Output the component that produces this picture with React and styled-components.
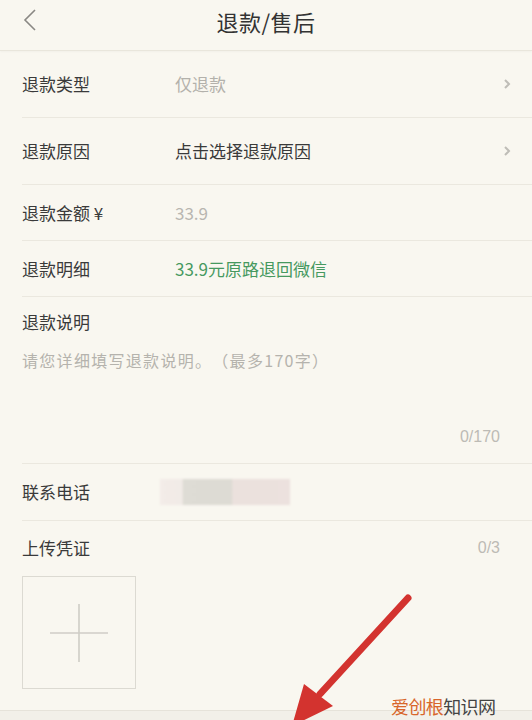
import styled, { createGlobalStyle } from 'styled-components';

const GlobalStyle = createGlobalStyle`
  body {
    margin: 0;
    background: #f9f7f0;
    font-family: 'Noto Sans CJK SC', 'Noto Sans', sans-serif;
  }
`;

const Page = styled.div`
  position: relative;
  width: 532px;
  height: 720px;
  overflow: hidden;
  background: #f9f7f0;
  display: flex;
  flex-direction: column;
  color: #3a3a3a;
`;

const Header = styled.header`
  height: 50px;
  flex-shrink: 0;
  display: flex;
  align-items: flex-start;
  justify-content: center;
  position: relative;
  border-bottom: 1px solid #e9e6dc;
  box-shadow: 0 1px 2px rgba(0, 0, 0, 0.03);
`;

const BackButton = styled.svg`
  position: absolute;
  left: 22px;
  top: 8px;
`;

const Title = styled.h1`
  margin: 6px 0 0;
  font-size: 22px;
  line-height: 30px;
  font-weight: 400;
  color: #333;
  letter-spacing: 0.5px;
`;

const Row = styled.div`
  height: ${(p) => p.$h}px;
  flex-shrink: 0;
  margin-left: 22px;
  padding-right: 20px;
  display: flex;
  align-items: center;
  border-bottom: 1px solid #ebe8df;
`;

const Label = styled.span`
  width: 153px;
  flex-shrink: 0;
  font-size: 17px;
  line-height: 22px;
  color: #3a3a3a;
`;

const Value = styled.span`
  flex: 1;
  font-size: 17px;
  line-height: 22px;
  color: ${(p) => p.$color || '#3a3a3a'};
  font-family: 'Noto Sans CJK SC', 'Liberation Sans', sans-serif;
`;

const Chevron = styled.svg`
  flex-shrink: 0;
`;

const Section = styled.div`
  flex-shrink: 0;
  margin-left: 22px;
  padding: ${(p) => p.$pad};
  display: flex;
  flex-direction: column;
  border-bottom: ${(p) => (p.$last ? 'none' : '1px solid #ebe8df')};
`;

const SectionHead = styled.div`
  display: flex;
  justify-content: space-between;
  align-items: center;
  height: 22px;
  padding-right: 32px;
`;

const Placeholder = styled.div`
  margin-top: 16px;
  font-size: 16px;
  line-height: 22px;
  letter-spacing: 1.3px;
  text-spacing-trim: space-all;
  color: #b5b3ad;
`;

const Counter = styled.div`
  align-self: flex-end;
  margin-top: ${(p) => p.$top || 0}px;
  padding-right: ${(p) => (p.$inset ? 32 : 0)}px;
  font-size: 16px;
  line-height: 22px;
  color: #bdbbb5;
  font-family: 'Liberation Sans', sans-serif;
`;

const Masked = styled.div`
  width: 130px;
  height: 26px;
  margin-left: -15px;
  background: linear-gradient(90deg, #f3ece8 0%, #f1ebe7 17%, #dedcd5 18%, #dddbd4 55%, #ebe1dd 56%, #ece1de 100%);
  filter: blur(1px);
`;

const UploadBox = styled.div`
  width: 114px;
  height: 113px;
  margin-top: 17px;
  border: 1px solid #dcdad2;
  box-sizing: border-box;
  display: flex;
  align-items: center;
  justify-content: center;
`;

const BottomBar = styled.div`
  flex: 1;
  border-top: 1px solid #e6e3da;
  background: #f2f0e9;
`;

const Arrow = styled.svg`
  position: absolute;
  left: 280px;
  top: 588px;
`;

const Watermark = styled.div`
  position: absolute;
  left: 391px;
  top: 694px;
  font-size: 18px;
  line-height: 24px;
  letter-spacing: -0.6px;
  color: #444;
  span {
    color: #d8662b;
  }
`;

const RightChevron = () => (
  <Chevron width="10" height="14" viewBox="0 0 10 14">
    <path d="M3 3 L7 7 L3 11" fill="none" stroke="#bfbdb7" strokeWidth="2" />
  </Chevron>
);

export default function App() {
  return (
    <Page>
      <GlobalStyle />
      <Header>
        <BackButton width="16" height="24" viewBox="0 0 16 24">
          <path d="M13 2 L3 12 L13 22" fill="none" stroke="#8a8884" strokeWidth="1.6" />
        </BackButton>
        <Title>退款/售后</Title>
      </Header>

      <Row $h={66}>
        <Label>退款类型</Label>
        <Value $color="#b3b1ab">仅退款</Value>
        <RightChevron />
      </Row>
      <Row $h={66}>
        <Label>退款原因</Label>
        <Value>点击选择退款原因</Value>
        <RightChevron />
      </Row>
      <Row $h={55}>
        <Label>退款金额 ¥</Label>
        <Value $color="#b8b6b0">33.9</Value>
      </Row>
      <Row $h={55}>
        <Label>退款明细</Label>
        <Value $color="#46995f">33.9元原路退回微信</Value>
      </Row>

      <Section $pad="14px 0 15px">
        <SectionHead>
          <Label>退款说明</Label>
        </SectionHead>
        <Placeholder>请您详细填写退款说明。（最多170字）</Placeholder>
        <Counter $top={55} $inset>0/170</Counter>
      </Section>

      <Row $h={56}>
        <Label>联系电话</Label>
        <Masked />
      </Row>

      <Section $pad="16px 0 21px" $last>
        <SectionHead>
          <Label>上传凭证</Label>
          <Counter>0/3</Counter>
        </SectionHead>
        <UploadBox>
          <svg width="58" height="58" viewBox="0 0 58 58">
            <path d="M29 0 V58 M0 29 H58" stroke="#cfcdc6" strokeWidth="1.6" />
          </svg>
        </UploadBox>
      </Section>

      <BottomBar />

      <Arrow width="140" height="140" viewBox="0 0 140 140">
        <path d="M128 10 L40 106" stroke="#d3332f" strokeWidth="7" strokeLinecap="round" />
        <path d="M12 138 L24 96 L53 118 Z" fill="#d3332f" />
      </Arrow>

      <Watermark>
        <span>爱创根</span>知识网
      </Watermark>
    </Page>
  );
}
